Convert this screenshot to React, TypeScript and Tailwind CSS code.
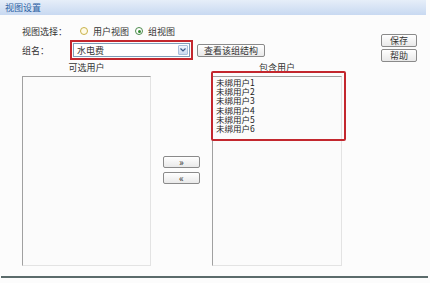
const font = { fontFamily: '"Noto Sans CJK SC", "Liberation Sans", sans-serif' };

function Radio({ checked }: { checked?: boolean }) {
  return (
    <span
      className={`flex h-[8px] w-[8px] items-center justify-center rounded-full border ${
        checked ? 'border-[#4c8a4c] bg-white' : 'border-[#c9b24a] bg-[#fffbe6]'
      }`}
    >
      {checked && <span className="h-[3px] w-[3px] rounded-full bg-[#2f8a2f]" />}
    </span>
  );
}

function Btn({ label, className = '' }: { label: string; className?: string }) {
  return (
    <button
      className={`flex items-center justify-center rounded-[2px] border border-[#8a8a8a] bg-gradient-to-b from-white to-[#e9e9e9] text-[9px] leading-none text-[#333] ${className}`}
    >
      {label}
    </button>
  );
}

const members = ['未绑用户1', '未绑用户2', '未绑用户3', '未绑用户4', '未绑用户5', '未绑用户6'];

export default function App() {
  return (
    <div className="relative h-[283px] w-[430px] overflow-hidden bg-[#fcfcfc]" style={font}>
      {/* title bar */}
      <div className="flex h-[15px] w-[426px] items-center bg-gradient-to-b from-[#e6eef9] to-[#c8d9f1] pl-[5px] text-[9px] leading-none text-[#2c5fa3]">
        视图设置
      </div>

      <div className="flex">
        <div className="flex w-[370px] flex-col pl-[22px]">
          {/* view select */}
          <div className="mt-[11px] flex h-[10px] items-center text-[9px] leading-none text-[#333]">
            <span className="w-[58px]">视图选择：</span>
            <Radio />
            <span className="ml-[5px]">用户视图</span>
            <span className="ml-[6px]">
              <Radio checked />
            </span>
            <span className="ml-[5px]">组视图</span>
          </div>

          {/* group name */}
          <div className="mt-[7px] flex h-[14px] items-center text-[9px] leading-none text-[#333]">
            <span className="w-[51px]">组名：</span>
            <div className="flex h-[14px] w-[117px] items-center justify-between border border-[#7f9db9] bg-white outline-2 outline-offset-1 outline-[#c3272e]">
              <span className="pl-[3px]">水电费</span>
              <span className="mr-[1px] flex h-[10px] w-[10px] items-center justify-center rounded-[1px] border border-[#a9bfdc] bg-gradient-to-b from-[#f0f5fc] to-[#c9d9f0]">
                <svg width="6" height="4" viewBox="0 0 6 4">
                  <path d="M0.5 0.5 L3 3 L5.5 0.5" fill="none" stroke="#3a5a8c" strokeWidth="1.2" />
                </svg>
              </span>
            </div>
            <Btn label="查看该组结构" className="ml-[7px] h-[13px] w-[68px]" />
          </div>

          {/* lists */}
          <div className="mt-[6px] flex items-end">
            <div className="flex w-[129px] flex-col items-center">
              <span className="mb-[4px] h-[9px] text-[9px] leading-[9px] text-[#333]">可选用户</span>
              <div className="h-[190px] w-[129px] border border-t-[#a0a0a0] border-l-[#a0a0a0] border-r-[#e3e3e3] border-b-[#e3e3e3] bg-[#fbfbfb]" />
            </div>

            <div className="mx-[12px] mb-[82px] flex flex-col gap-[4px]">
              <Btn label="»" className="h-[12px] w-[37px] text-[10px]" />
              <Btn label="«" className="h-[12px] w-[37px] text-[10px]" />
            </div>

            <div className="relative flex w-[130px] flex-col items-center">
              <span className="mb-[4px] h-[9px] text-[9px] leading-[9px] text-[#333]">包含用户</span>
              <div className="h-[190px] w-[130px] border border-t-[#a0a0a0] border-l-[#a0a0a0] border-r-[#e3e3e3] border-b-[#e3e3e3] bg-[#fbfbfb] pl-[3px] pt-[1px]">
                {members.map((m) => (
                  <div key={m} className="h-[9.2px] text-[8.5px] leading-[9.2px] text-[#222]">
                    {m}
                  </div>
                ))}
              </div>
              {/* highlight annotation */}
              <div className="absolute left-[-1px] top-[8px] h-[70px] w-[135px] rounded-[2px] border-2 border-[#c3272e]" />
            </div>
          </div>
        </div>

        {/* right buttons */}
        <div className="mt-[19px] ml-[11px] flex flex-col gap-[2px]">
          <Btn label="保存" className="h-[13px] w-[36px]" />
          <Btn label="帮助" className="h-[13px] w-[36px]" />
        </div>
      </div>

      {/* bottom rule */}
      <div className="absolute left-[1px] top-[276px] h-[2px] w-[427px] bg-[#5b6b6b]" />
    </div>
  );
}
